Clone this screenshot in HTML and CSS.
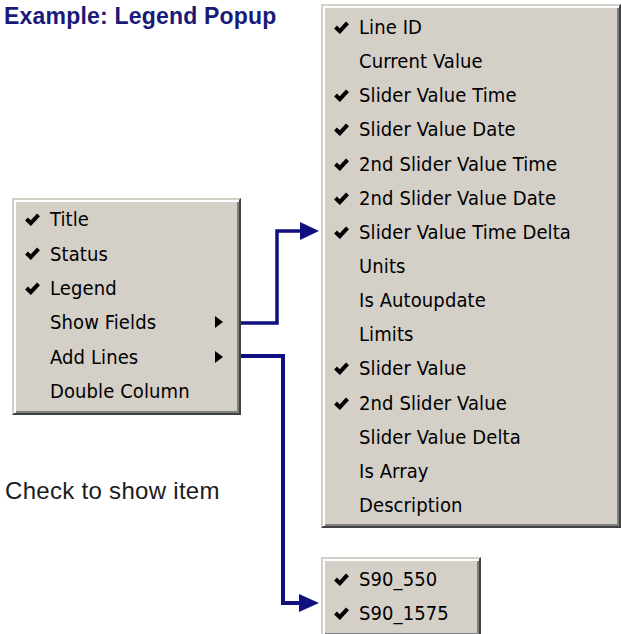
FILE: index.html
```html
<!DOCTYPE html>
<html lang="en">
<head>
  <meta charset="UTF-8">
  <title>Example: Legend Popup</title>
  <link rel="stylesheet" href="styles.css">
</head>
<body>
  <svg class="defs" width="0" height="0">
    <symbol id="tick" viewBox="0 0 15 13">
      <path d="M1.5 6 L5.8 10.2 L13.5 1.8" fill="none" stroke="#000" stroke-width="4"/>
    </symbol>
  </svg>

  <div class="canvas">
    <h1 class="heading">Example: Legend Popup</h1>

    <!-- popup menu -->
    <ul class="menu menu-main">
      <li class="item"><svg class="tick"><use href="#tick"/></svg>Title</li>
      <li class="item"><svg class="tick"><use href="#tick"/></svg>Status</li>
      <li class="item"><svg class="tick"><use href="#tick"/></svg>Legend</li>
      <li class="item">Show Fields<span class="sub"></span></li>
      <li class="item">Add Lines<span class="sub"></span></li>
      <li class="item">Double Column</li>
    </ul>

    <p class="hint">Check to show item</p>

    <!-- Show Fields submenu -->
    <ul class="menu menu-fields">
      <li class="item"><svg class="tick"><use href="#tick"/></svg>Line ID</li>
      <li class="item">Current Value</li>
      <li class="item"><svg class="tick"><use href="#tick"/></svg>Slider Value Time</li>
      <li class="item"><svg class="tick"><use href="#tick"/></svg>Slider Value Date</li>
      <li class="item"><svg class="tick"><use href="#tick"/></svg>2nd Slider Value Time</li>
      <li class="item"><svg class="tick"><use href="#tick"/></svg>2nd Slider Value Date</li>
      <li class="item"><svg class="tick"><use href="#tick"/></svg>Slider Value Time Delta</li>
      <li class="item">Units</li>
      <li class="item">Is Autoupdate</li>
      <li class="item">Limits</li>
      <li class="item"><svg class="tick"><use href="#tick"/></svg>Slider Value</li>
      <li class="item"><svg class="tick"><use href="#tick"/></svg>2nd Slider Value</li>
      <li class="item">Slider Value Delta</li>
      <li class="item">Is Array</li>
      <li class="item">Description</li>
    </ul>

    <!-- Add Lines submenu -->
    <ul class="menu menu-lines">
      <li class="item"><svg class="tick"><use href="#tick"/></svg>S90_550</li>
      <li class="item"><svg class="tick"><use href="#tick"/></svg>S90_1575</li>
    </ul>

    <svg class="links" width="621" height="634" viewBox="0 0 621 634">
      <polyline points="241,323 277,323 277,231 302,231" fill="none" stroke="#10107f" stroke-width="3.5"/>
      <polygon points="300,222 319,231 300,240" fill="#10107f"/>
      <polyline points="241,356 283,356 283,603 302,603" fill="none" stroke="#10107f" stroke-width="4"/>
      <polygon points="299,594 319,603 299,612" fill="#10107f"/>
    </svg>
  </div>
</body>
</html>
```

FILE: styles.css
```css
body {
  margin: 0;
  background-color: white;
}

.defs {
  position: absolute;
}

.canvas {
  position: relative;
  width: 621px;
  height: 634px;
  overflow: hidden;
}

.heading {
  margin: 0;
  padding: 3px 0 0 4px;
  font-family: "Liberation Sans", Arial, sans-serif;
  font-size: 23px;
  font-weight: bold;
  letter-spacing: 0.2px;
  color: #1a1a78;
}

.hint {
  position: absolute;
  left: 5px;
  top: 477px;
  margin: 0;
  font-family: "Liberation Sans", Arial, sans-serif;
  font-size: 24px;
  letter-spacing: 0.3px;
  color: #1c1c1c;
}

.menu {
  position: absolute;
  box-sizing: border-box;
  margin: 0;
  list-style: none;
  background-color: #d4d0c8;
  border: 2px solid;
  border-color: #d4d0c8 #404040 #404040 #d4d0c8;
  box-shadow: inset 2px 2px #fff, inset -2px -2px #808080;
  font-family: "DejaVu Sans Condensed", "DejaVu Sans", sans-serif;
  font-size: 20px;
  letter-spacing: 0.1px;
  color: #000;
}

.menu-main {
  left: 12px;
  top: 198px;
  width: 229px;
  height: 217px;
  padding: 2px 0 0;
}

.menu-main .item {
  height: 34.4px;
}

.menu-fields {
  left: 321px;
  top: 4px;
  width: 300px;
  height: 524px;
  padding: 4px 0 0;
}

.menu-fields .item {
  height: 34.15px;
}

.menu-lines {
  left: 321px;
  top: 557px;
  width: 160px;
  height: 80px;
  padding: 3px 0 0;
}

.item {
  position: relative;
  display: flex;
  align-items: center;
  height: 34px;
  padding: 0 16px 0 36px;
  white-space: nowrap;
}

.tick {
  position: absolute;
  left: 11px;
  top: 11px;
  width: 15px;
  height: 13px;
}

.sub {
  margin-left: auto;
  width: 0;
  height: 0;
  border-left: 8px solid #000;
  border-top: 6px solid transparent;
  border-bottom: 6px solid transparent;
}

.links {
  position: absolute;
  left: 0;
  top: 0;
  pointer-events: none;
}
```
